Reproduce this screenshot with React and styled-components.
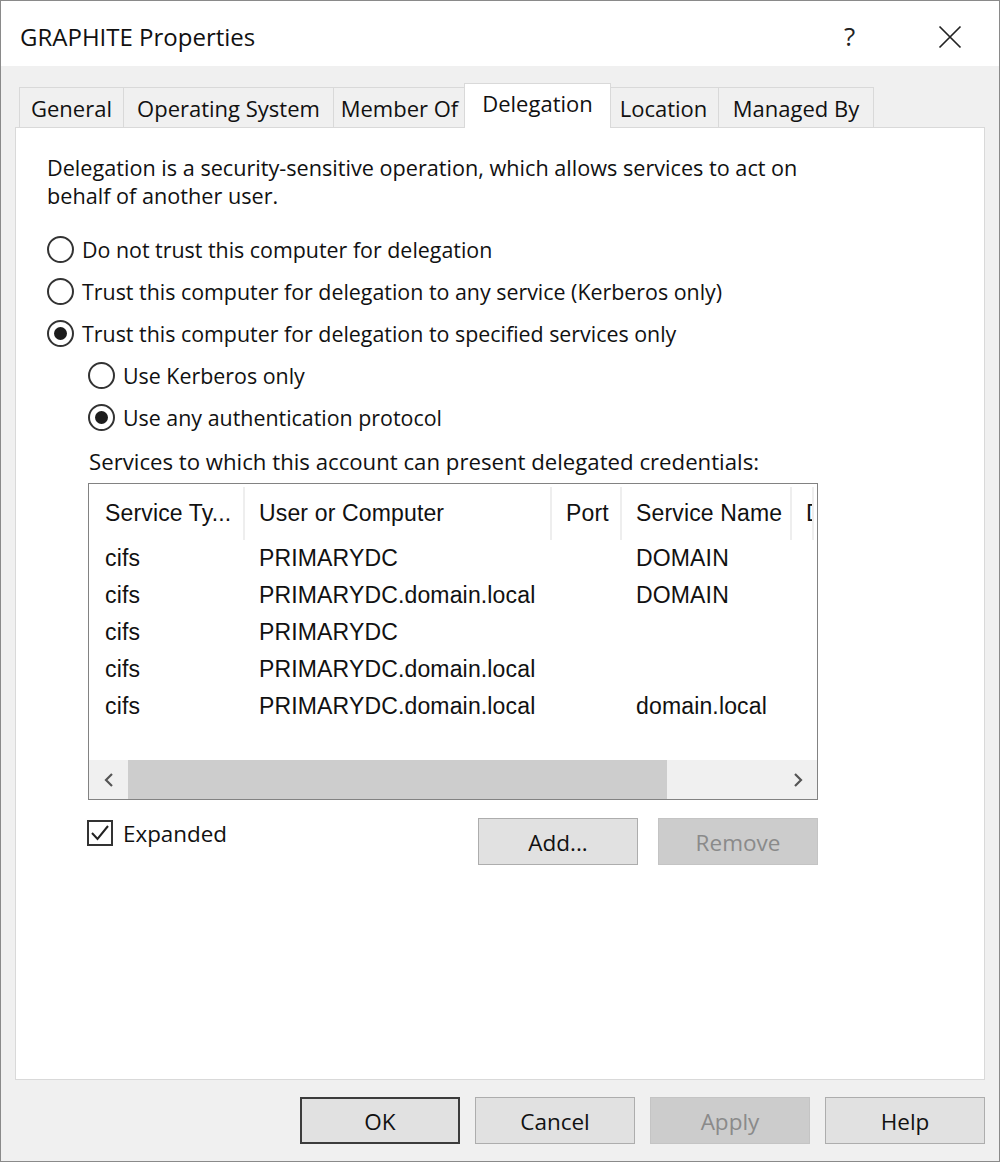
import React from "react";
import styled, { createGlobalStyle } from "styled-components";

const Global = createGlobalStyle`
  html, body { margin: 0; padding: 0; background: #fff; }
  * { box-sizing: border-box; }
`;

const Window = styled.div`
  width: 1000px;
  height: 1162px;
  border: 1px solid #8a8a8a;
  background: #f0f0f0;
  display: flex;
  flex-direction: column;
  font-family: "Open Sans", "Noto Sans", sans-serif;
  color: #111;
`;

const TitleBar = styled.div`
  height: 65px;
  background: #fff;
  display: flex;
  align-items: center;
  padding-left: 19px;
  flex: none;
`;

const Title = styled.div`
  flex: 1;
  font-size: 24px;
  padding-top: 6px;
`;

const TitleButton = styled.div`
  width: 98px;
  height: 65px;
  display: flex;
  align-items: center;
  justify-content: center;
  font-size: 26px;
  color: #222;
  padding-top: ${(p) => p.$shift || 0}px;
  padding-right: ${(p) => p.$right || 0}px;
`;

const Body = styled.div`
  flex: 1;
  display: flex;
  flex-direction: column;
  padding: 0 14px;
`;

const TabStrip = styled.div`
  display: flex;
  align-items: flex-end;
  padding: 18px 0 0 4px;
  height: 62px;
  position: relative;
  z-index: 1;
  margin-bottom: -1px;
`;

const Tab = styled.div`
  width: ${(p) => p.$w}px;
  height: ${(p) => (p.$active ? 45 : 41)}px;
  margin: ${(p) => (p.$active ? "0 -2px 0 -2px" : "0")};
  border: 1px solid #d9d9d9;
  border-left-width: ${(p) => (p.$first || p.$active ? 1 : 0)}px;
  border-bottom: ${(p) => (p.$active ? "none" : "1px solid #d9d9d9")};
  background: ${(p) => (p.$active ? "#fff" : "#f0f0f0")};
  display: flex;
  align-items: center;
  justify-content: center;
  font-size: 22px;
  padding-bottom: ${(p) => (p.$active ? 6 : 0)}px;
  position: relative;
  z-index: ${(p) => (p.$active ? 2 : 1)};
`;

const Panel = styled.div`
  flex: 1;
  background: #fff;
  border: 1px solid #d9d9d9;
  padding: 26px 0 0 31px;
  display: flex;
  flex-direction: column;
`;

const Description = styled.p`
  margin: 0;
  font-size: 21.65px;
  line-height: 28px;
  width: 790px;
`;

const RadioGroup = styled.div`
  display: flex;
  flex-direction: column;
  margin-top: ${(p) => p.$top || 0}px;
`;

const RadioRow = styled.label`
  height: 42px;
  display: flex;
  align-items: center;
  gap: 8px;
  font-size: 21.4px;
`;

const RadioCircle = styled.span`
  width: 27px;
  height: 27px;
  border-radius: 50%;
  border: 2px solid #333;
  display: flex;
  align-items: center;
  justify-content: center;
  flex: none;
  &::after {
    content: "";
    width: 13px;
    height: 13px;
    border-radius: 50%;
    background: #1c1c1c;
    display: ${(p) => (p.$checked ? "block" : "none")};
  }
`;

const SubSection = styled.div`
  padding-left: 41px;
  display: flex;
  flex-direction: column;
`;

const Label = styled.div`
  font-size: 22.2px;
  line-height: 28px;
  margin-top: 10px;
  padding-left: 1px;
  white-space: nowrap;
`;

const ListBox = styled.div`
  margin-top: 7px;
  width: 730px;
  height: 317px;
  border: 1px solid #828282;
  display: flex;
  flex-direction: column;
  overflow: hidden;
  font-family: "Liberation Sans", Arial, sans-serif;
  font-size: 23px;
  letter-spacing: 0.15px;
  color: #111;
`;

const GridRow = styled.div`
  display: grid;
  grid-template-columns: 156px 307px 70px 170px 22px;
  height: ${(p) => (p.$header ? 56 : 37)}px;
  flex: none;
`;

const Cell = styled.div`
  display: flex;
  align-items: center;
  padding-left: ${(p) => p.$pad || 15}px;
  white-space: nowrap;
  overflow: hidden;
  position: relative;
  padding-top: ${(p) => (p.$header ? 3 : 0)}px;
  ${(p) =>
    p.$header &&
    `
    &::after {
      content: "";
      position: absolute;
      right: 0;
      top: 3px;
      bottom: 0;
      width: 2px;
      background: #eeeeee;
    }
  `}
`;

const Filler = styled.div`
  flex: 1;
`;

const ScrollBar = styled.div`
  height: 39px;
  display: flex;
  background: #f0f0f0;
  flex: none;
`;

const ScrollArrow = styled.div`
  width: 39px;
  display: flex;
  align-items: center;
  justify-content: center;
  flex: none;
`;

const ScrollTrack = styled.div`
  flex: 1;
  display: flex;
`;

const ScrollThumb = styled.div`
  width: 539px;
  background: #cdcdcd;
`;

const ActionRow = styled.div`
  width: 731px;
  margin-top: 18px;
  margin-left: -1px;
  display: flex;
  align-items: flex-start;
`;

const CheckRow = styled.label`
  flex: 1;
  display: flex;
  align-items: center;
  gap: 10px;
  margin-top: 2px;
  font-size: 22.4px;
  height: 26px;
`;

const CheckBox = styled.span`
  width: 26px;
  height: 26px;
  border: 2px solid #333;
  display: flex;
  align-items: center;
  justify-content: center;
  background: #fff;
`;

const Button = styled.div`
  width: 160px;
  height: 47px;
  background: ${(p) => (p.$disabled ? "#cccccc" : "#e1e1e1")};
  border: ${(p) =>
    p.$default ? "2px solid #3c3c3c" : p.$disabled ? "1px solid #c4c4c4" : "1px solid #adadad"};
  color: ${(p) => (p.$disabled ? "#8a8a8a" : "#111")};
  display: flex;
  align-items: center;
  justify-content: center;
  font-size: 22.5px;
  padding-top: 1px;
`;

const ButtonGroup = styled.div`
  display: flex;
  gap: 20px;
`;

const Footer = styled.div`
  height: 81px;
  flex: none;
  display: flex;
  justify-content: flex-end;
  gap: 15px;
  padding-top: 17px;
`;

const CloseIcon = () => (
  <svg width="24" height="24" viewBox="0 0 24 24">
    <path d="M1.5 1.5 L22.5 22.5 M22.5 1.5 L1.5 22.5" stroke="#222" strokeWidth="1.7" fill="none" />
  </svg>
);

const Chevron = ({ dir }) => (
  <svg width="10" height="16" viewBox="0 0 10 16">
    <path
      d={dir === "left" ? "M8 2 L2 8 L8 14" : "M2 2 L8 8 L2 14"}
      stroke="#555"
      strokeWidth="2.2"
      fill="none"
    />
  </svg>
);

const CheckMark = () => (
  <svg width="20" height="20" viewBox="0 0 20 20">
    <path d="M2 10 L7.5 16 L18 3" stroke="#222" strokeWidth="2" fill="none" />
  </svg>
);

const tabs = [
  { name: "General", w: 105 },
  { name: "Operating System", w: 210 },
  { name: "Member Of", w: 132 },
  { name: "Delegation", w: 147, active: true },
  { name: "Location", w: 110 },
  { name: "Managed By", w: 155 },
];

const rows = [
  ["cifs", "PRIMARYDC", "", "DOMAIN", ""],
  ["cifs", "PRIMARYDC.domain.local", "", "DOMAIN", ""],
  ["cifs", "PRIMARYDC", "", "", ""],
  ["cifs", "PRIMARYDC.domain.local", "", "", ""],
  ["cifs", "PRIMARYDC.domain.local", "", "domain.local", ""],
];

const headers = ["Service Ty...", "User or Computer", "Port", "Service Name", "D"];

export default function App() {
  return (
    <>
      <Global />
      <Window>
        <TitleBar>
          <Title>GRAPHITE Properties</Title>
          <TitleButton $shift={4} $right={5}>?</TitleButton>
          <TitleButton $shift={6}>
            <CloseIcon />
          </TitleButton>
        </TitleBar>
        <Body>
          <TabStrip>
            {tabs.map((t, i) => (
              <Tab key={t.name} $w={t.w} $active={t.active} $first={i === 0}>
                {t.name}
              </Tab>
            ))}
          </TabStrip>
          <Panel>
            <Description>
              Delegation is a security-sensitive operation, which allows services to act on
              behalf of another user.
            </Description>
            <RadioGroup $top={18}>
              <RadioRow>
                <RadioCircle />
                Do not trust this computer for delegation
              </RadioRow>
              <RadioRow>
                <RadioCircle />
                Trust this computer for delegation to any service (Kerberos only)
              </RadioRow>
              <RadioRow>
                <RadioCircle $checked />
                Trust this computer for delegation to specified services only
              </RadioRow>
            </RadioGroup>
            <SubSection>
              <RadioGroup>
                <RadioRow>
                  <RadioCircle />
                  Use Kerberos only
                </RadioRow>
                <RadioRow>
                  <RadioCircle $checked />
                  Use any authentication protocol
                </RadioRow>
              </RadioGroup>
              <Label>Services to which this account can present delegated credentials:</Label>
              <ListBox>
                <GridRow $header>
                  {headers.map((h, i) => (
                    <Cell key={h} $header $pad={i === 0 ? 16 : 14}>
                      {h}
                    </Cell>
                  ))}
                </GridRow>
                {rows.map((r, ri) => (
                  <GridRow key={ri}>
                    {r.map((c, ci) => (
                      <Cell key={ci} $pad={ci === 0 ? 16 : 14}>
                        {c}
                      </Cell>
                    ))}
                  </GridRow>
                ))}
                <Filler />
                <ScrollBar>
                  <ScrollArrow>
                    <Chevron dir="left" />
                  </ScrollArrow>
                  <ScrollTrack>
                    <ScrollThumb />
                  </ScrollTrack>
                  <ScrollArrow>
                    <Chevron dir="right" />
                  </ScrollArrow>
                </ScrollBar>
              </ListBox>
              <ActionRow>
                <CheckRow>
                  <CheckBox>
                    <CheckMark />
                  </CheckBox>
                  Expanded
                </CheckRow>
                <ButtonGroup>
                  <Button>Add...</Button>
                  <Button $disabled>Remove</Button>
                </ButtonGroup>
              </ActionRow>
            </SubSection>
          </Panel>
          <Footer>
            <Button $default>OK</Button>
            <Button>Cancel</Button>
            <Button $disabled>Apply</Button>
            <Button>Help</Button>
          </Footer>
        </Body>
      </Window>
    </>
  );
}
